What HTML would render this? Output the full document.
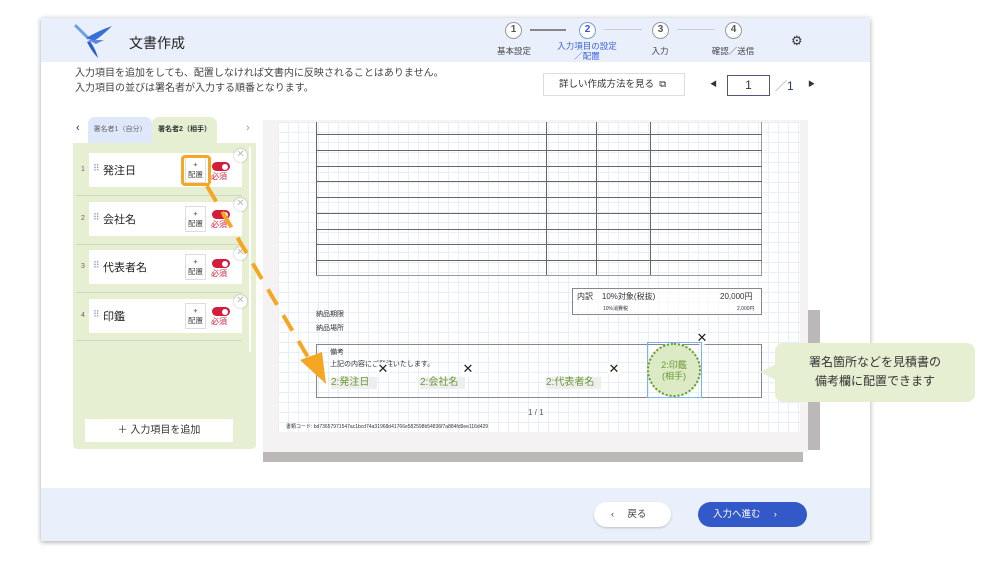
<!DOCTYPE html><html><head><meta charset="utf-8"><style>
*{box-sizing:border-box;margin:0;padding:0}
body{width:998px;height:563px;background:#fff;font-family:"Liberation Sans","Noto Sans CJK JP",sans-serif;position:relative;overflow:hidden;color:#333}
.a{position:absolute}
.win{left:41px;top:18px;width:829px;height:523px;background:#fff;box-shadow:0 1px 5px rgba(0,0,0,.35)}
.hdr{left:41px;top:18px;width:829px;height:44px;background:#e9f0fc}
.ftr{left:41px;top:488px;width:829px;height:53px;background:#e9f0fc}
.c{width:17px;height:17px;border:1.5px solid #999;border-radius:50%;font-size:10px;font-weight:bold;text-align:center;line-height:14px;color:#555;background:#fff}
.sl{font-size:8.5px;color:#444;text-align:center;width:80px}
.card{left:89px;width:153px;height:34px;background:#fff}
.card .t{position:absolute;left:14px;top:9px;font-size:11px;color:#222}
.card .d{position:absolute;left:4px;top:10px;font-size:9px;color:#7a9ad0;letter-spacing:-2px}
.num{font-size:7px;color:#666;left:81px}
.pb{width:21px;height:26px;border:1px solid #ddd;background:#fff;font-size:7.5px;text-align:center;line-height:10px;color:#444;padding-top:2px}
.tg{width:18px;height:9px;background:#d21d3b;border-radius:5px}
.tg:after{content:"";position:absolute;right:2px;top:1.5px;width:6px;height:6px;border-radius:50%;background:#fff}
.req{font-size:8px;color:#d21d3b}
.x{width:13px;height:13px;border-radius:50%;background:#fff;box-shadow:0 0 2px rgba(0,0,0,.3);color:#bbb;font-size:10px;text-align:center;line-height:12px}
.sep{left:77px;width:165px;height:1px;background:#cfd8c0}
.grid{background-color:#fff;background-image:linear-gradient(#e6eefc 1px,transparent 1px),linear-gradient(90deg,#e6eefc 1px,transparent 1px);background-size:10px 10px}
.hl{left:316px;width:446px;height:1px;background:#666}
.vl{top:122px;width:1px;height:154px;background:#666}
.fld{font-size:10px;color:#6a9a34;background:#eee;height:12px;line-height:12px}
.xx{font-size:13px;color:#222;width:14px;height:14px;text-align:center;line-height:14px;background:#fff;border-radius:50%}
</style></head><body>
<div class="a win"></div>
<div class="a hdr"></div>
<div class="a ftr"></div>
<svg class="a" style="left:74px;top:24px" width="40" height="36" viewBox="0 0 40 36">
<path d="M2 2 L14 14" stroke="#6b9de8" stroke-width="3" stroke-linecap="round"/>
<path d="M12 14 Q26 6 38 2 Q28 12 20 17 Z" fill="#3b6fd8"/>
<path d="M14 16 L30 16 L22 20 Z" fill="#5a8ae0"/>
<path d="M16 17 Q22 26 24 34 Q18 28 13 18 Z" fill="#2f5fc8"/>
</svg>
<div class="a" style="left:129px;top:33px;font-size:14px;color:#222">文書作成</div>
<div class="a" style="left:530px;top:29px;width:36px;height:1.5px;background:#888"></div>
<div class="a" style="left:604px;top:29px;width:38px;height:1px;background:#ccd"></div>
<div class="a" style="left:677px;top:29px;width:38px;height:1px;background:#ccd"></div>
<div class="a c" style="left:505px;top:22px">1</div>
<div class="a c" style="left:579px;top:22px;border-color:#7a9ae0;color:#3358c8">2</div>
<div class="a c" style="left:652px;top:22px">3</div>
<div class="a c" style="left:725px;top:22px">4</div>
<div class="a sl" style="left:474px;top:45px">基本設定</div>
<div class="a sl" style="left:547px;top:41px;color:#3c64d8;line-height:10px">入力項目の設定<br>／配置</div>
<div class="a sl" style="left:620px;top:45px">入力</div>
<div class="a sl" style="left:693px;top:45px">確認／送信</div>
<div class="a" style="left:791px;top:33px;font-size:13px;color:#333">⚙</div>
<div class="a" style="left:75px;top:66px;font-size:10px;line-height:15px;color:#444">入力項目を追加をしても、配置しなければ文書内に反映されることはありません。<br>入力項目の並びは署名者が入力する順番となります。</div>
<div class="a" style="left:543px;top:73px;width:142px;height:23px;border:1px solid #ddd;font-size:9.5px;line-height:21px;padding-left:15px;color:#333">詳しい作成方法を見る &nbsp;⧉</div>
<div class="a" style="left:710px;top:79px;font-size:7px">◀</div>
<div class="a" style="left:727px;top:75px;width:43px;height:21px;border:1px solid #557;font-size:12px;text-align:center;line-height:19px">1</div>
<div class="a" style="left:775px;top:77px;font-size:12px;color:#223a6a"><span style="color:#999">／</span>1</div>
<div class="a" style="left:808px;top:79px;font-size:7px">▶</div>
<div class="a" style="left:76px;top:122px;font-size:11px">‹</div>
<div class="a" style="left:88px;top:117px;width:64px;height:26px;background:#dfe8fb;border-radius:7px 7px 0 0;font-size:7px;color:#666;text-align:center;line-height:26px">署名者1（自分）</div>
<div class="a" style="left:152px;top:117px;width:65px;height:27px;background:#e6efd2;border-radius:7px 7px 0 0;font-size:7px;color:#333;font-weight:bold;text-align:center;line-height:26px">署名者2（相手）</div>
<div class="a" style="left:246px;top:122px;font-size:11px;color:#999">›</div>
<div class="a" style="left:73px;top:143px;width:183px;height:306px;background:#e6efd2;border-radius:0 0 4px 4px"></div>
<div class="a" style="left:249px;top:147px;width:2px;height:205px;background:#fff"></div>
<div class="a card" style="top:153px"><span class="d">⠿</span><span class="t">発注日</span></div>
<div class="a card" style="top:202px"><span class="d">⠿</span><span class="t">会社名</span></div>
<div class="a card" style="top:250px"><span class="d">⠿</span><span class="t">代表者名</span></div>
<div class="a card" style="top:299px"><span class="d">⠿</span><span class="t">印鑑</span></div>
<div class="a num" style="top:166px">1</div><div class="a num" style="top:215px">2</div><div class="a num" style="top:263px">3</div><div class="a num" style="top:312px">4</div>
<div class="a sep" style="top:195px"></div><div class="a sep" style="top:244px"></div><div class="a sep" style="top:292px"></div><div class="a sep" style="top:340px"></div>
<div class="a pb" style="left:185px;top:157px">+<br>配置</div>
<div class="a pb" style="left:185px;top:206px">+<br>配置</div>
<div class="a pb" style="left:185px;top:254px">+<br>配置</div>
<div class="a pb" style="left:185px;top:303px">+<br>配置</div>
<div class="a tg" style="left:212px;top:162px"></div><div class="a req" style="left:211px;top:171px">必須</div>
<div class="a tg" style="left:212px;top:210px"></div><div class="a req" style="left:211px;top:219px">必須</div>
<div class="a tg" style="left:212px;top:259px"></div><div class="a req" style="left:211px;top:268px">必須</div>
<div class="a tg" style="left:212px;top:307px"></div><div class="a req" style="left:211px;top:316px">必須</div>
<div class="a x" style="left:234px;top:149px">✕</div><div class="a x" style="left:234px;top:198px">✕</div><div class="a x" style="left:234px;top:247px">✕</div><div class="a x" style="left:234px;top:295px">✕</div>
<div class="a" style="left:85px;top:419px;width:148px;height:23px;background:#fff;font-size:10px;text-align:center;line-height:23px;color:#333">＋ 入力項目を追加</div>
<div class="a" style="left:263px;top:120px;width:545px;height:332px;background:#f4f2f2"></div>
<div class="a grid" style="left:278px;top:122px;width:522px;height:310px"></div>
<div class="a" style="left:808px;top:310px;width:12px;height:140px;background:#bdb8b8"></div>
<div class="a" style="left:263px;top:452px;width:540px;height:10px;background:#bdb8b8"></div>
<div class="a" style="left:316px;top:122px;width:1px;height:154px;background:#666"></div>
<div class="a" style="left:761px;top:122px;width:1px;height:154px;background:#999"></div>
<div class="a vl" style="left:546px"></div><div class="a vl" style="left:596px"></div><div class="a vl" style="left:650px"></div>
<div class="a hl" style="top:134px"></div><div class="a hl" style="top:150px"></div><div class="a hl" style="top:166px"></div><div class="a hl" style="top:181px"></div><div class="a hl" style="top:197px"></div><div class="a hl" style="top:213px"></div><div class="a hl" style="top:229px"></div><div class="a hl" style="top:244px"></div><div class="a hl" style="top:260px"></div><div class="a hl" style="top:275px;background:#999"></div>
<div class="a" style="left:572px;top:288px;width:190px;height:27px;border:1px solid #888;background:rgba(255,255,255,.6)"></div>
<div class="a" style="left:577px;top:291px;font-size:8px;color:#333">内訳 &nbsp;&nbsp; 10%対象(税抜)</div>
<div class="a" style="left:720px;top:291px;font-size:8px;color:#333">20,000円</div>
<div class="a" style="left:603px;top:305px;font-size:5px;color:#333">10%消費税</div>
<div class="a" style="left:737px;top:305px;font-size:5px;color:#333">2,000円</div>
<div class="a" style="left:316px;top:308px;font-size:7px;color:#333;line-height:14px">納品期限<br>納品場所</div>
<div class="a" style="left:316px;top:344px;width:446px;height:54px;border:1px solid #888"></div>
<div class="a" style="left:330px;top:347px;font-size:7px;color:#333;line-height:12px">備考<br>上記の内容にご発注いたします。</div>
<div class="a fld" style="left:331px;top:377px;width:46px">2:発注日</div>
<div class="a fld" style="left:420px;top:377px;width:45px">2:会社名</div>
<div class="a fld" style="left:546px;top:377px;width:55px">2:代表者名</div>
<div class="a xx" style="left:376px;top:362px">✕</div><div class="a xx" style="left:461px;top:362px">✕</div><div class="a xx" style="left:607px;top:362px">✕</div><div class="a xx" style="left:695px;top:331px">✕</div>
<div class="a" style="left:647px;top:342px;width:55px;height:56px;border:1px solid #7ab4f0"></div>
<div class="a" style="left:647px;top:343px;width:54px;height:54px;border-radius:50%;background:#dcebc5;border:2px dotted #6a9a34;font-size:9px;color:#6a9a34;text-align:center;line-height:11px;padding-top:15px">2:印鑑<br>(相手)</div>
<div class="a" style="left:528px;top:408px;font-size:8px;color:#555">1 / 1</div>
<div class="a" style="left:286px;top:423px;font-size:5px;color:#333">書類コード: bd73657971547ac1bcd74a31968d41766e582598b54836f7a884fd9ee116d429</div>
<div class="a" style="left:181px;top:155px;width:30px;height:31px;border:3px solid #f5a623;border-radius:4px"></div>
<svg class="a" style="left:0;top:0" width="998" height="563"><line x1="207" y1="186" x2="312" y2="364" stroke="#f5a623" stroke-width="4" stroke-dasharray="18 12"/><path d="M300 360 L326 384 L322 352 Z" fill="#f5a623"/></svg>
<div class="a" style="left:775px;top:343px;width:200px;height:59px;background:#e6efd2;border-radius:8px;font-size:12px;color:#333;text-align:center;line-height:19px;padding-top:10px">署名箇所などを見積書の<br>備考欄に配置できます</div>
<div class="a" style="left:760px;top:364px;width:0;height:0;border-top:8px solid transparent;border-bottom:8px solid transparent;border-right:16px solid #e6efd2"></div>
<div class="a" style="left:594px;top:502px;width:77px;height:25px;background:#fff;border-radius:13px;box-shadow:0 1px 2px rgba(0,0,0,.2);font-size:9.5px;line-height:25px;padding-left:17px;color:#444">‹ &nbsp;&nbsp;&nbsp; 戻る</div>
<div class="a" style="left:698px;top:502px;width:109px;height:25px;background:#3358c8;border-radius:13px;font-size:9.5px;line-height:25px;padding-left:15px;color:#fff">入力へ進む &nbsp;&nbsp;&nbsp; ›</div>
</body></html>
